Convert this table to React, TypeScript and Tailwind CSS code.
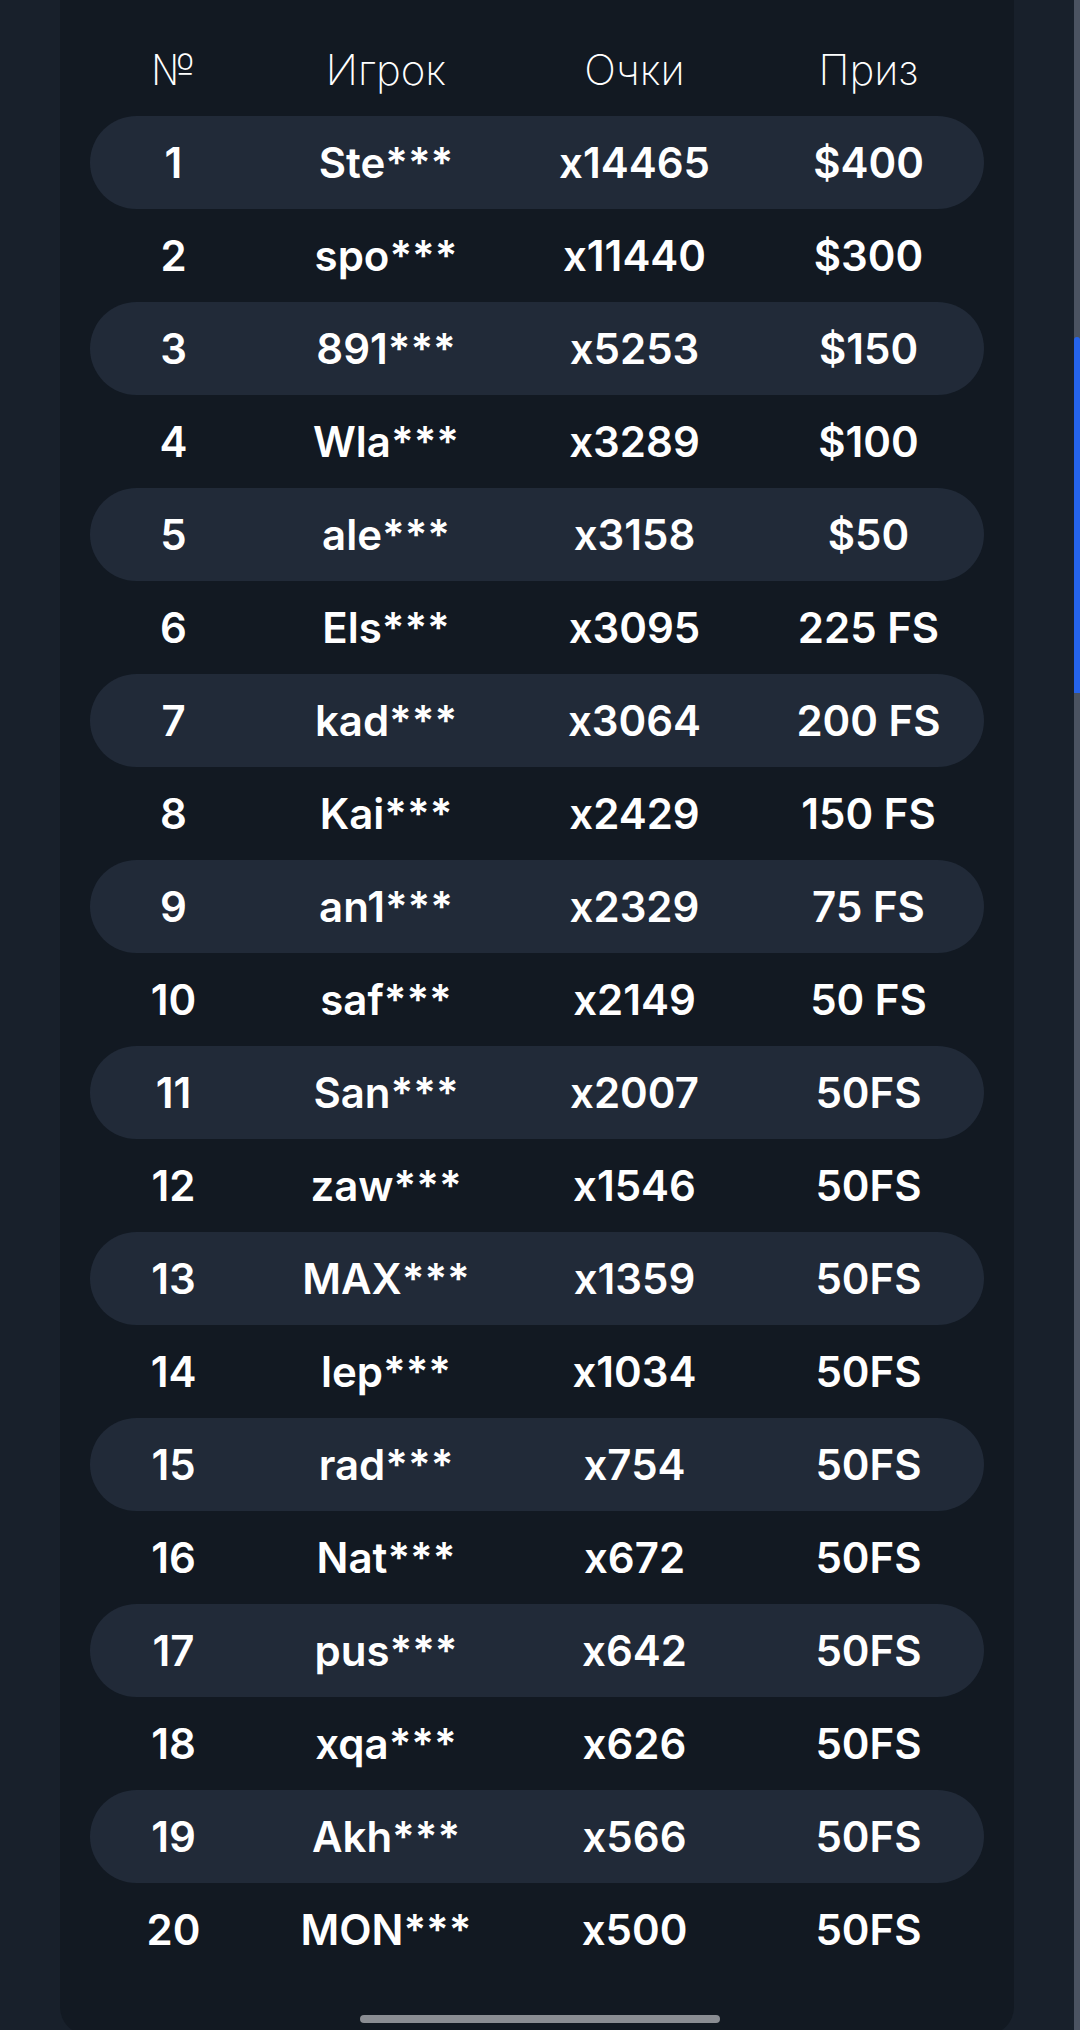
import React from 'react';

interface Row {
  place: number;
  player: string;
  score: string;
  prize: string;
}

const rows: Row[] = [
  { place: 1, player: 'Ste***', score: 'x14465', prize: '$400' },
  { place: 2, player: 'spo***', score: 'x11440', prize: '$300' },
  { place: 3, player: '891***', score: 'x5253', prize: '$150' },
  { place: 4, player: 'Wla***', score: 'x3289', prize: '$100' },
  { place: 5, player: 'ale***', score: 'x3158', prize: '$50' },
  { place: 6, player: 'Els***', score: 'x3095', prize: '225 FS' },
  { place: 7, player: 'kad***', score: 'x3064', prize: '200 FS' },
  { place: 8, player: 'Kai***', score: 'x2429', prize: '150 FS' },
  { place: 9, player: 'an1***', score: 'x2329', prize: '75 FS' },
  { place: 10, player: 'saf***', score: 'x2149', prize: '50 FS' },
  { place: 11, player: 'San***', score: 'x2007', prize: '50FS' },
  { place: 12, player: 'zaw***', score: 'x1546', prize: '50FS' },
  { place: 13, player: 'MAX***', score: 'x1359', prize: '50FS' },
  { place: 14, player: 'lep***', score: 'x1034', prize: '50FS' },
  { place: 15, player: 'rad***', score: 'x754', prize: '50FS' },
  { place: 16, player: 'Nat***', score: 'x672', prize: '50FS' },
  { place: 17, player: 'pus***', score: 'x642', prize: '50FS' },
  { place: 18, player: 'xqa***', score: 'x626', prize: '50FS' },
  { place: 19, player: 'Akh***', score: 'x566', prize: '50FS' },
  { place: 20, player: 'MON***', score: 'x500', prize: '50FS' },
];

const cols = 'grid grid-cols-[167px_258px_239px_229px] items-center text-center';

export default function App() {
  return (
    <div className="relative h-[2030px] overflow-hidden bg-[#18202b] font-['Inter',sans-serif] text-white">
      <div className="flex h-full">
        <div className="w-[60px] shrink-0" />
        <div className="w-[954px] h-[2035px] shrink-0 rounded-b-[28px] bg-[#121922] px-[30px] pt-[23px]">
          <div className={`${cols} h-[93px] text-[42px] font-extralight`}>
            <div>№</div>
            <div>Игрок</div>
            <div>Очки</div>
            <div>Приз</div>
          </div>
          {rows.map((row) => (
            <div
              key={row.place}
              className={`${cols} h-[93px] rounded-full text-[42px] font-semibold ${
                row.place % 2 === 1 ? 'bg-[#212a38]' : ''
              }`}
            >
              <div>{row.place}</div>
              <div>{row.player}</div>
              <div>{row.score}</div>
              <div>{row.prize}</div>
            </div>
          ))}
        </div>
        <div className="flex-1" />
        <div className="flex w-[6px] shrink-0 flex-col bg-[#4b5361]">
          <div className="h-[337px]" />
          <div className="h-[356px] rounded-t-[3px] bg-[#2563eb]" />
        </div>
      </div>
      <div className="absolute bottom-[7px] left-[360px] h-[8px] w-[360px] rounded-full bg-[#8a8d93]" />
    </div>
  );
}
